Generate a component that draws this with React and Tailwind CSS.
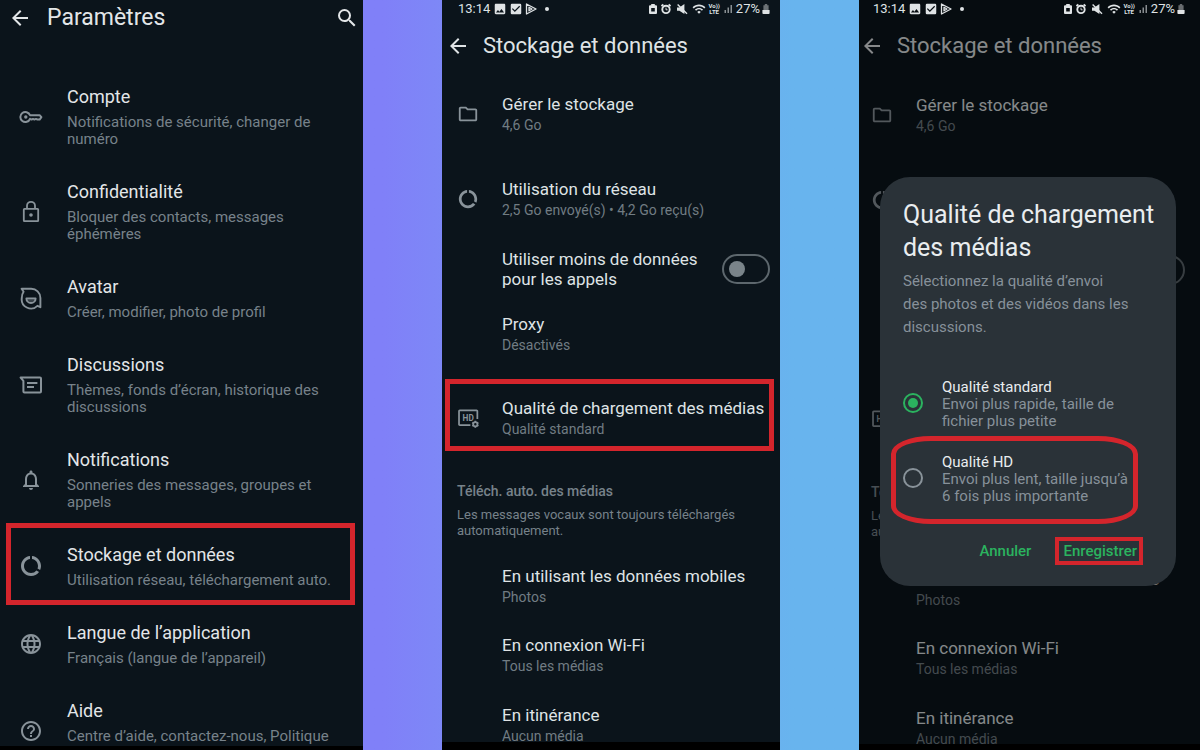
import React, { useState } from 'react';
import clsx from 'clsx';
import {
  MdArrowBack,
  MdSearch,
  MdNotificationsNone,
  MdLanguage,
  MdHelpOutline,
  MdOutlineFolder,
  MdDataUsage,
  MdImage,
  MdCheckBox,
  MdWifi,
  MdSignalCellularAlt,
} from 'react-icons/md';

// ---------------------------------------------------------------------------
// Icons
// ---------------------------------------------------------------------------

const KeyIcon = () => (
  <svg className="size-6" viewBox="0 0 24 24" fill="none" stroke="currentColor" strokeWidth="2" strokeLinejoin="round">
    <path d="M11 10.2A5 5 0 1 0 11 13.8L12.6 14.6 14 13.9 15.4 14.6 17 13.9 18.4 14.6H20.6L22.4 12.2 20.6 10.2Z" />
    <circle cx="6.8" cy="12" r="1.7" fill="currentColor" stroke="none" />
  </svg>
);

const LockIcon = () => (
  <svg className="size-6" viewBox="0 0 24 24" fill="none" stroke="currentColor" strokeWidth="1.8">
    <rect x="4.8" y="8.800" width="14.4" height="12.4" rx="0.6" />
    <path d="M8 8.600V5.800a4 4 0 0 1 8 0v2.800" />
    <circle cx="12" cy="15" r="1.8" fill="currentColor" stroke="none" />
  </svg>
);

const AvatarIcon = () => (
  <svg className="size-6" viewBox="0 0 24 24" fill="none" stroke="currentColor" strokeWidth="1.9" strokeLinejoin="round">
    <path d="M2.6 2.8H12a9.2 9.2 0 0 1 9.4 9.2v9.2l-3-1.400A9.2 9.2 0 0 1 2.8 12c0-2.6.6-4.600 1.800-6.200Z" />
    <path d="M7.4 12.4h9.2a4.6 4.6 0 0 1-9.2 0Z" fill="currentColor" fillOpacity=".35" />
  </svg>
);

const ChatsIcon = () => (
  <svg className="size-6" viewBox="0 0 24 24" fill="none" stroke="currentColor" strokeWidth="2" strokeLinejoin="round">
    <path d="M1.6 4.6H21a1 1 0 0 1 1 1V18.400a1 1 0 0 1-1 1H5.400a1 1 0 0 1-1-1V7.8Z" />
    <path d="M8 10h10.4M8 14h7" />
  </svg>
);

const HdIcon = () => (
  <svg className="size-[22px]" viewBox="0 0 24 24" fill="none" stroke="currentColor" strokeWidth="1.9">
    <path d="M14.6 19.800H3a.8.8 0 0 1-.8-.8V4.400a.8.8 0 0 1 .8-.8h18.400a.8.8 0 0 1 .8.8v8.600" />
    <circle cx="20" cy="18.800" r="2.300" />
    <path d="M20 15v1.4M20 21.200v1.4M16.700 16.900l1.200.7M22.100 20l1.200.7M16.700 20.700l1.200-.7M22.100 17.600l1.200-.7" />
    <text x="12.200" y="14.800" textAnchor="middle" fontSize="9" fontWeight="700" fontFamily="Roboto, sans-serif" fill="currentColor" stroke="none">HD</text>
  </svg>
);

const PlayIcon = () => (
  <svg className="size-3" viewBox="0 0 12 12" fill="none" stroke="currentColor" strokeWidth="1.3" strokeLinejoin="round">
    <path d="M1.5 1 11 6 1.5 11Z" />
    <path d="M4 4.2 7 6 4 7.8Z" />
  </svg>
);

const BatterySaverIcon = () => (
  <svg className="h-3 w-2.5" viewBox="0 0 10 12">
    <path fill="currentColor" fillRule="evenodd" d="M3.2 1h3.6v1.2H8A1 1 0 0 1 9 3.200V10a1 1 0 0 1-1 1H2a1 1 0 0 1-1-1V3.200a1 1 0 0 1 1-1h1.2ZM3.200 5v3.600h3.600V5Z" />
  </svg>
);

const AlarmIcon = () => (
  <svg className="size-3" viewBox="0 0 12 12" fill="none" stroke="currentColor">
    <path d="M1.400 3 3.400 1.600M10.600 3 8.600 1.600" strokeWidth="1.800" />
    <circle cx="6" cy="6.400" r="3.700" strokeWidth="1.900" />
    <path d="M6 4.600v2.200h1.600" strokeWidth=".9" />
  </svg>
);

const MuteIcon = () => (
  <svg className="size-3" viewBox="0 0 12 12">
    <path d="M1 4.400h2.400L8.400 1v10L3.400 7.800H1Z" fill="currentColor" />
    <path d="M1.600 1.400 11 10.800" stroke="currentColor" strokeWidth="1.400" />
  </svg>
);

const BatteryIcon = () => (
  <svg className="h-3 w-2" viewBox="0 0 8 12" fill="currentColor">
    <path d="M2.8 1h2.4v1.200H6.600V7H1.400V2.200h1.400Z" opacity=".45" />
    <path d="M.4 7h7.200v3a1 1 0 0 1-1 1H1.400a1 1 0 0 1-1-1Z" />
  </svg>
);

// ---------------------------------------------------------------------------
// Shared pieces
// ---------------------------------------------------------------------------

function StatusBar({ className }) {
  return (
    <div className={clsx('relative z-10 flex h-[18px] shrink-0 items-center justify-between text-[13px] leading-4 text-[#dfe3e5]', className)}>
      <div className="flex items-center gap-0.5">
        <span className="mr-px">13:14</span>
        <MdImage className="size-3.5" />
        <MdCheckBox className="size-3.5" />
        <PlayIcon />
        <span className="ml-1.5 size-1 rounded-full bg-current" />
      </div>
      <div className="flex items-center gap-0.5">
        <BatterySaverIcon />
        <AlarmIcon />
        <span className="mx-0.5"><MuteIcon /></span>
        <MdWifi className="size-3.5" />
        <span className="flex flex-col items-center text-[6px] leading-[6px] font-bold">
          <span>Vo))</span>
          <span>LTE</span>
        </span>
        <MdSignalCellularAlt className="size-3 opacity-60" />
        <span>27%</span>
        <BatteryIcon />
      </div>
    </div>
  );
}

// Red frame drawn around the step to follow
function Highlight({ className }) {
  return <span aria-hidden="true" className={clsx('pointer-events-none absolute border-[#d4252c]', className)} />;
}

// ---------------------------------------------------------------------------
// Step 1: settings
// ---------------------------------------------------------------------------

const SETTINGS = [
  { title: 'Compte', sub: 'Notifications de sécurité, changer de numéro', icon: <KeyIcon /> },
  { title: 'Confidentialité', sub: 'Bloquer des contacts, messages éphémères', icon: <LockIcon /> },
  { title: 'Avatar', sub: 'Créer, modifier, photo de profil', icon: <AvatarIcon /> },
  { title: 'Discussions', sub: 'Thèmes, fonds d’écran, historique des discussions', icon: <ChatsIcon /> },
  { title: 'Notifications', sub: 'Sonneries des messages, groupes et appels', icon: <MdNotificationsNone className="size-6" /> },
  { title: 'Stockage et données', sub: 'Utilisation réseau, téléchargement auto.', icon: <MdDataUsage className="size-6" />, highlighted: true },
  { title: 'Langue de l’application', sub: 'Français (langue de l’appareil)', icon: <MdLanguage className="size-6" /> },
  { title: 'Aide', sub: 'Centre d’aide, contactez-nous, Politique', icon: <MdHelpOutline className="size-6" />, tall: true },
];

function SettingsScreen() {
  return (
    <section className="flex min-w-0 flex-col overflow-hidden bg-[#0b141b]">
      <header className="flex h-9 shrink-0 items-center pr-1 pl-2 text-[#e3e6e8]">
        <button type="button" aria-label="Retour"><MdArrowBack className="size-6" /></button>
        <h1 className="ml-[15px] flex-1 text-[23px] leading-7">Paramètres</h1>
        <button type="button" aria-label="Rechercher"><MdSearch className="size-6" /></button>
      </header>
      <ul className="flex min-h-0 flex-1 flex-col gap-8 overflow-hidden pt-[49px]">
        {SETTINGS.map(({ title, sub, icon, highlighted, tall }) => (
          <li key={title} className="relative shrink-0">
            <button type="button" className={clsx('flex w-full items-center gap-6 pr-4 pl-[19px] text-left', tall && 'min-h-[63px]')}>
              <span className="shrink-0 text-[#89939a]">{icon}</span>
              <span className="flex flex-col gap-[5px] self-start">
                <span className="text-lg leading-6 text-[#e3e6e8]">{title}</span>
                <span className="text-[15px] leading-[17px] text-[#77828a]">{sub}</span>
              </span>
            </button>
            {highlighted && <Highlight className="-top-5 right-2 -bottom-4 left-1.5 border-[5px]" />}
          </li>
        ))}
      </ul>
      <div className="h-1 shrink-0 bg-black" />
    </section>
  );
}

// ---------------------------------------------------------------------------
// Step 2: storage and data
// ---------------------------------------------------------------------------

function StorageRow({ title, sub, icon, className, children }) {
  return (
    <div className={clsx('relative', className)}>
      <button type="button" className="flex w-full items-center text-left">
        <span className="w-[45px] shrink-0 text-[#89939a]">{icon}</span>
        <span className="flex flex-col gap-0.5">
          <span className="text-[17px] leading-5 whitespace-nowrap text-[#dfe3e5]">{title}</span>
          <span className="text-sm leading-[18px] text-[#717c83]">{sub}</span>
        </span>
      </button>
      {children}
    </div>
  );
}

function StorageScreen({ dialog }) {
  const [lessData, setLessData] = useState(false);
  return (
    <section className="relative flex min-w-0 flex-col overflow-hidden bg-[#0b141b]">
      <StatusBar className={dialog ? 'pr-[15px] pl-3.5' : 'pr-2.5 pl-4'} />
      <header className={clsx('flex h-14 shrink-0 items-center text-[#dfe3e5]', dialog ? 'pl-px' : 'pl-1')}>
        <button type="button" aria-label="Retour"><MdArrowBack className="size-6" /></button>
        <h2 className="ml-[13px] text-[22px] leading-7">Stockage et données</h2>
      </header>

      <div className={clsx('min-h-0 flex-1 overflow-hidden', dialog ? 'pt-[21px] pl-3' : 'pt-5 pl-[15px]')}>
        <StorageRow title="Gérer le stockage" sub="4,6 Go" icon={<MdOutlineFolder className="size-[22px]" />} />
        <StorageRow
          className="mt-[45px]"
          title="Utilisation du réseau"
          sub="2,5 Go envoyé(s) • 4,2 Go reçu(s)"
          icon={<MdDataUsage className="size-[22px]" />}
        />

        <label className={clsx('mt-[30px] flex items-center justify-between pl-[45px]', dialog ? 'pr-[15px]' : 'pr-2.5')}>
          <span className="text-[17px] leading-5 text-[#dfe3e5]">
            Utiliser moins de données<br />pour les appels
          </span>
          <input
            type="checkbox"
            role="switch"
            checked={lessData}
            onChange={(e) => setLessData(e.target.checked)}
            className="h-[30px] w-12 shrink-0 appearance-none rounded-full border-2 border-[#5d676d] p-[5px] before:block before:size-4 before:rounded-full before:bg-[#7a848a] checked:before:ml-5"
          />
        </label>

        <StorageRow className="mt-[25px]" title="Proxy" sub="Désactivés" />
        <StorageRow
          className={clsx('mt-11', dialog && 'mr-6 overflow-hidden')}
          title="Qualité de chargement des médias"
          sub="Qualité standard"
          icon={<HdIcon />}
        >
          {!dialog && <Highlight className="-top-[19px] right-1.5 -bottom-[13px] -left-3 border-[5px]" />}
        </StorageRow>

        <h3 className="mt-[45px] text-sm leading-4 font-medium text-[#77828a]">
          Téléch. auto. des médias
        </h3>
        <p className="mt-2 pr-5 text-[13px] leading-4 text-[#77828a]">
          Les messages vocaux sont toujours téléchargés automatiquement.
        </p>

        <StorageRow className={dialog ? 'mt-[29px]' : 'mt-[27px]'} title="En utilisant les données mobiles" sub="Photos" />
        <StorageRow className="mt-[29px]" title="En connexion Wi-Fi" sub="Tous les médias" />
        <StorageRow className="mt-[30px]" title="En itinérance" sub="Aucun média" />
      </div>
      <div className={clsx('shrink-0 bg-black', dialog ? 'h-1.5' : 'h-2')} />

      {dialog && (
        <>
          <div className="absolute inset-0 bg-black/40" />
          <QualityDialog />
        </>
      )}
    </section>
  );
}

// ---------------------------------------------------------------------------
// Step 3: upload quality dialog
// ---------------------------------------------------------------------------

function QualityOption({ title, sub, value, selected, onSelect, children }) {
  return (
    <label className="relative flex items-start gap-[19px]">
      <input
        type="radio"
        name="quality"
        value={value}
        checked={selected === value}
        onChange={() => onSelect(value)}
        className="mt-3.5 size-5 shrink-0 appearance-none rounded-full border-2 border-[#89939a] p-[3px] before:block before:size-2.5 before:rounded-full checked:border-[#2bb35f] checked:before:bg-[#2bb35f]"
      />
      <span className="flex flex-col text-[15px] leading-[17px]">
        <span className="text-[#e9edef]">{title}</span>
        <span className="text-[#87919a]">{sub}</span>
      </span>
      {children}
    </label>
  );
}

function QualityDialog() {
  const [quality, setQuality] = useState('standard');
  return (
    <div
      role="dialog"
      aria-labelledby="quality-title"
      className="absolute top-[177px] right-6 left-[21px] rounded-[30px] bg-[#2a3238] px-[23px] pt-[21px] pb-[23px]"
    >
      <h2 id="quality-title" className="text-[25px] leading-[33px] whitespace-nowrap text-[#e9edef]">
        Qualité de chargement<br />des médias
      </h2>
      <p className="mt-1.5 text-[15px] leading-[23px] whitespace-nowrap text-[#87919a]">
        Sélectionnez la qualité d’envoi<br />des photos et des vidéos dans les<br />discussions.
      </p>

      <div className="mt-10 flex flex-col gap-6">
        <QualityOption
          title="Qualité standard"
          sub={<>Envoi plus rapide, taille de<br />fichier plus petite</>}
          value="standard"
          selected={quality}
          onSelect={setQuality}
        />
        <QualityOption
          title="Qualité HD"
          sub={<>Envoi plus lent, taille jusqu’à<br />6 fois plus importante</>}
          value="hd"
          selected={quality}
          onSelect={setQuality}
        >
          <Highlight className="-top-[18px] right-[15px] -bottom-[19px] -left-3 rounded-[40px/18px] border-[5px]" />
        </QualityOption>
      </div>

      <div className="mt-[34px] mr-4 flex justify-end gap-8 text-[15px] leading-6 font-medium text-[#2bb35f]">
        <button type="button">Annuler</button>
        <button type="button" className="relative">
          Enregistrer
          <Highlight className="-inset-y-0.5 -right-1.5 -left-2 border-4" />
        </button>
      </div>
    </div>
  );
}

// ---------------------------------------------------------------------------
// Page
// ---------------------------------------------------------------------------

export default function App() {
  return (
    <main className="grid h-screen grid-cols-[363fr_338fr_341fr] gap-x-[79px] overflow-hidden bg-linear-to-r from-[#8080f8] from-32% to-[#68b4ee] to-66% font-['Roboto',sans-serif]">
      <SettingsScreen />
      <StorageScreen />
      <StorageScreen dialog />
    </main>
  );
}
